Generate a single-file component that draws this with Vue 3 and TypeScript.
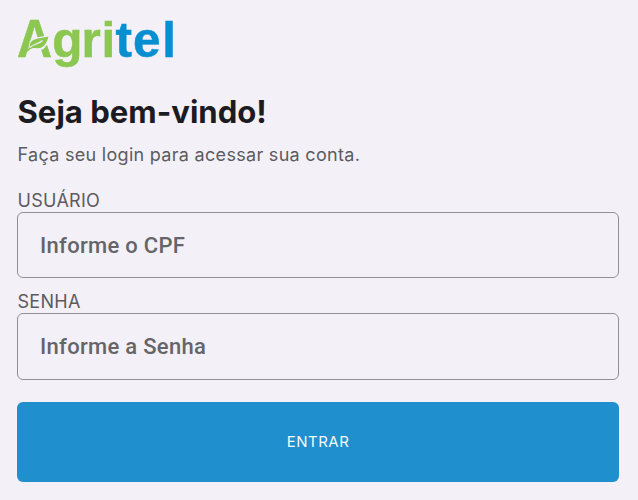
<script setup lang="ts">
import { ref } from 'vue'

interface Field {
  id: string
  label: string
  hint: string
  type: string
}

const fields: Field[] = [
  { id: 'cpf', label: 'USUÁRIO', hint: 'Informe o CPF', type: 'text' },
  { id: 'senha', label: 'SENHA', hint: 'Informe a Senha', type: 'password' },
]
const values = ref<Record<string, string>>({ cpf: '', senha: '' })
</script>

<template>
  <main class="page">
    <svg class="logo" width="158" height="50" viewBox="0 0 158 50" role="img" aria-label="Agritel">
      <g class="green">
        <text class="initial" x="0" y="39" textLength="35" lengthAdjust="spacingAndGlyphs">A</text>
        <text x="35.2" y="38.7">g</text>
        <text x="64.5" y="38.7">r</text>
        <text x="84.5" y="38.7">i</text>
      </g>
      <g class="blue">
        <text x="98.5" y="38.7">t</text>
        <text x="116" y="38.7">e</text>
        <text x="145.3" y="38.7">l</text>
      </g>
      <path class="gap" d="M12.5 24 C16 18 24 20 33 16.5 L33 20 C31 25 29 29 26 31.5 L11 33Z" />
      <path class="leaf" d="M12.8 29 C12 20.5 21 21 31.5 18.6 C29.5 26 26.5 31.5 18 30 C15 29.5 13 31 11 33.5 L9 33.5Z" />
      <path class="vein" d="M12.8 29.5 C17 25.5 21 26.5 25.5 22.5" />
    </svg>
    <h1 class="title">Seja bem-vindo!</h1>
    <p class="subtitle">Faça seu login para acessar sua conta.</p>
    <form class="form" @submit.prevent>
      <div v-for="field in fields" :key="field.id" class="field">
        <label class="label" :for="field.id">{{ field.label }}</label>
        <input :id="field.id" v-model="values[field.id]" class="input" :type="field.type" :placeholder="field.hint" />
      </div>
      <button class="submit" type="submit">ENTRAR</button>
    </form>
  </main>
</template>

<style>
body {
  background: #f3f1f7;
}
</style>

<style scoped>
.page {
  box-sizing: border-box;
  height: 500px;
  padding: 18px 19px 0 17px;
  background: #f3f1f7;
  font-family: Inter, sans-serif;
}
.logo {
  display: block;
  overflow: visible;
  font-family: "Liberation Sans", sans-serif;
  font-size: 49.5px;
  font-weight: 700;
}
.initial {
  font-size: 53px;
}
.green,
.leaf {
  fill: #8bc751;
}
.green {
  stroke: #8bc751;
  stroke-width: 0.5;
}
.blue {
  fill: #078fd0;
  stroke: #078fd0;
  stroke-width: 0.5;
}
.gap {
  fill: #f3f1f7;
}
.vein {
  fill: none;
  stroke: #f3f1f7;
  stroke-width: 1.1;
}
.title {
  margin: 24px 0 0 0.5px;
  color: #1c1b22;
  font-size: 31.1px;
  line-height: 40px;
  font-weight: 700;
}
.subtitle {
  margin: 10.5px 0 0 0.5px;
  color: #5c5b5f;
  font-size: 18px;
  line-height: 24px;
  letter-spacing: 0.3px;
}
.form {
  display: flex;
  flex-direction: column;
  margin-top: 22px;
}
.field {
  display: flex;
  flex-direction: column;
  height: 101.5px;
}
.label {
  height: 23px;
  padding-left: 0.5px;
  color: #5c5b5f;
  font-size: 18px;
  line-height: 23px;
  letter-spacing: 0.3px;
}
.input {
  box-sizing: border-box;
  width: 100%;
  height: 66.5px;
  padding: 1px 22px 0;
  border: 1px solid #929095;
  border-radius: 6px;
  outline: none;
  background: transparent;
  color: #1c1b22;
  font-family: Roboto, sans-serif;
  font-size: 22px;
  font-weight: 500;
  letter-spacing: 0.3px;
}
.input::placeholder {
  color: #656468;
  opacity: 1;
}
.submit {
  height: 80px;
  margin-top: 10.5px;
  padding: 0 0 2px;
  border: 0;
  border-radius: 6px;
  background: #1f8fce;
  color: #f3f8fc;
  font-family: inherit;
  font-size: 15px;
  letter-spacing: 0.5px;
}
</style>
